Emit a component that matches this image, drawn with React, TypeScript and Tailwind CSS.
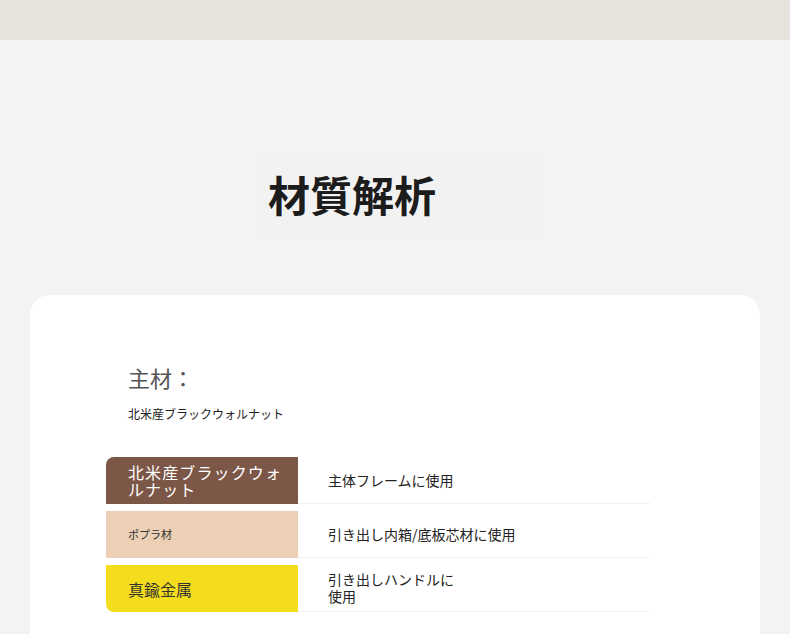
const rows = [
  {
    label: '北米産ブラックウォルナット',
    use: ['主体フレームに使用'],
    cell: 'bg-[#7c5646] text-white text-[16px] leading-[17px] tracking-[0.07em] rounded-tl-[8px]',
  },
  {
    label: 'ポプラ材',
    use: ['引き出し内箱/底板芯材に使用'],
    cell: 'bg-[#eccfb4] text-[#333] text-[11px]',
  },
  {
    label: '真鍮金属',
    use: ['引き出しハンドルに', '使用'],
    cell: 'bg-[#f3dd1c] text-[#333] text-[16px] rounded-bl-[8px]',
  },
];

export default function App() {
  return (
    <div
      className="min-h-[634px] bg-[#f4f2f2]"
      style={{ fontFamily: '"Noto Sans CJK JP", "Noto Sans", sans-serif' }}
    >
      <div className="h-10 bg-[#e7e2dc]" />

      <div className="mt-[112px] ml-[256px] flex h-[84px] w-[284px] items-center bg-[#f2f2f2] pl-[12px]">
        <h1 className="text-[42px] leading-none font-bold text-[#1c1c1c]">材質解析</h1>
      </div>

      <div className="mx-[30px] mt-[59px] h-[340px] rounded-t-[20px] bg-white pt-[66px] pl-[76px]">
        <div className="pl-[22px]">
          <div className="text-[22px] leading-[32px] text-[#555]">主材：</div>
          <div className="mt-[12px] text-[12px] leading-[18px] text-[#222]">北米産ブラックウォルナット</div>
        </div>

        <div className="mt-[34px] flex w-[544px] flex-col gap-[7px]">
          {rows.map((r) => (
            <div key={r.label} className="flex h-[47px]">
              <div className={`flex w-[192px] shrink-0 items-center pr-[8px] pl-[22px] ${r.cell}`}>
                {r.label}
              </div>
              <div className="flex flex-1 items-center border-b border-[#f0f0f0] pl-[30px] text-[14px] leading-[17px] text-[#222]">
                <div>
                  {r.use.map((u) => (
                    <div key={u}>{u}</div>
                  ))}
                </div>
              </div>
            </div>
          ))}
        </div>
      </div>
    </div>
  );
}
